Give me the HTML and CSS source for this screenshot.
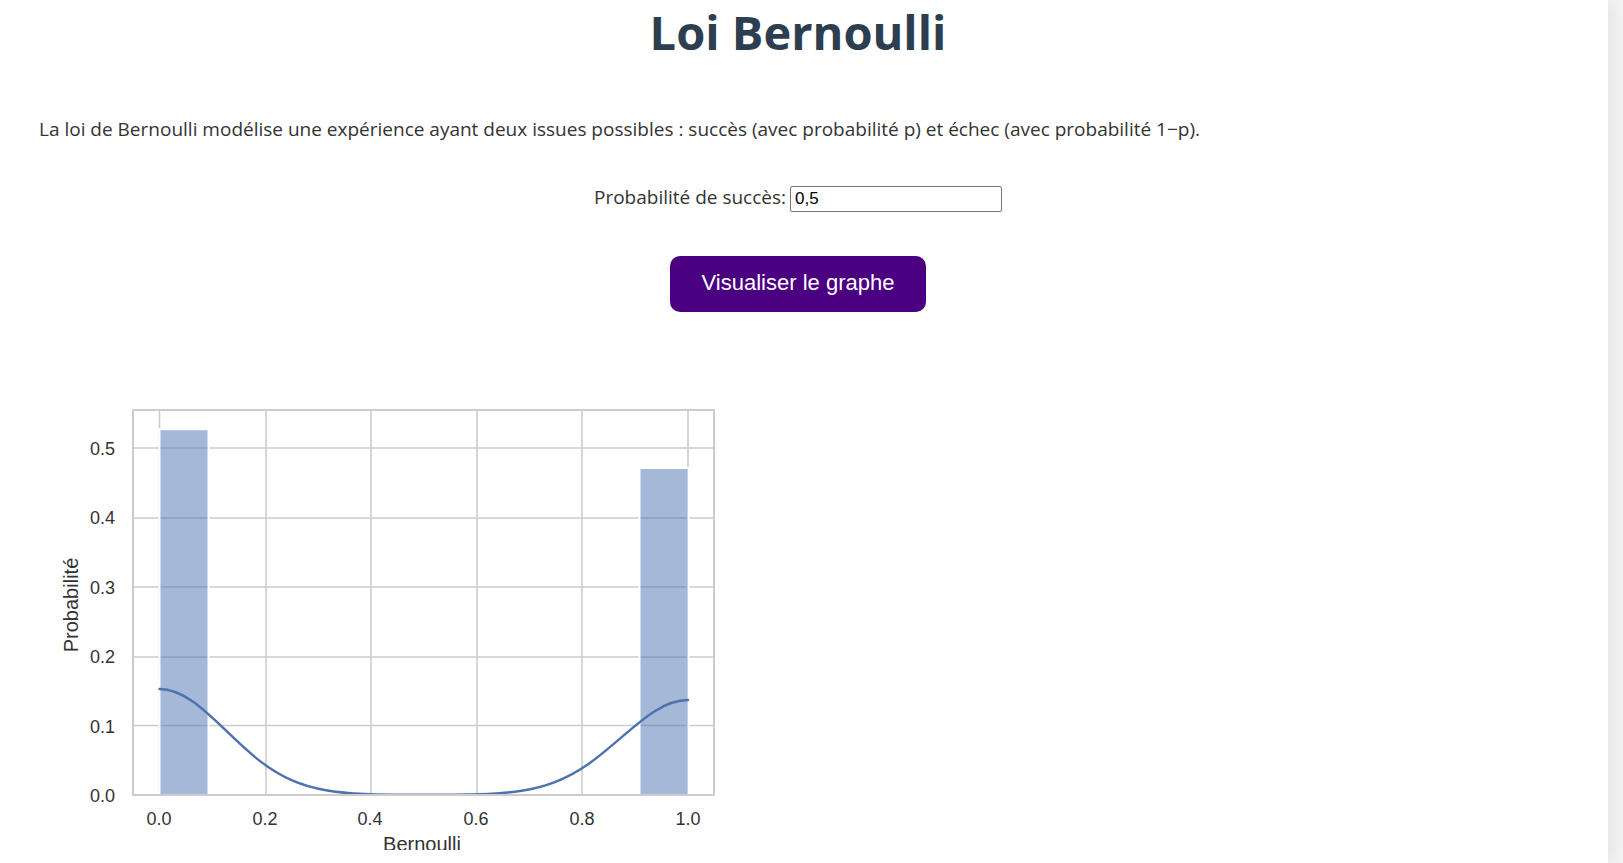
FILE: index.html
```html
<!DOCTYPE html>
<html lang="fr">
<head>
<meta charset="utf-8">
<title>Loi Bernoulli</title>
<link rel="stylesheet" href="styles.css">
</head>
<body>
<main class="panel">
  <h1 class="title">Loi Bernoulli</h1>
  <p class="intro">La loi de Bernoulli modélise une expérience ayant deux issues possibles : succès (avec probabilité p) et échec (avec probabilité 1−p).</p>
  <form class="form">
    <div class="field">
      <label for="proba">Probabilité de succès:</label>
      <input class="input" id="proba" type="text" inputmode="decimal" value="0,5">
    </div>
    <button class="submit" type="button">Visualiser le graphe</button>
  </form>
  <svg class="chart" viewBox="0 0 700 460" role="img" aria-label="Histogramme de la loi de Bernoulli">
    <path class="grid" d="M120.5 20V405M227 20V405M332 20V405M438 20V405M543 20V405M649 20V405M94 58H675M94 128H675M94 197H675M94 267H675M94 335.5H675"/>
    <rect class="bar" x="120.5" y="39.2" width="49" height="365.8"/>
    <rect class="bar" x="600.5" y="78" width="49" height="327"/>
    <path class="curve" d="M120.5 299C131.6 299 142.7 303.7 153.8 311.5S176 330 187.1 340.7S209.3 362 220.4 370.6S242.6 385.9 253.7 390.7S275.9 398.4 287 400.3S309.2 403.2 320.3 403.8S342.5 404.7 353.6 404.8M649 310C637.9 310 626.8 314.2 615.7 321.2S593.5 337.8 582.4 347.4S560.2 366.5 549.1 374.2S526.9 387.8 515.8 392.1S493.6 399.1 482.5 400.8S460.3 403.4 449.2 403.9S427 404.7 415.9 404.8L353.6 404.8"/>
    <rect class="frame" x="94" y="20" width="581" height="385"/>
    <g class="tick tick-y">
      <text x="76" y="65">0.5</text>
      <text x="76" y="134">0.4</text>
      <text x="76" y="204">0.3</text>
      <text x="76" y="273">0.2</text>
      <text x="76" y="343">0.1</text>
      <text x="76" y="412">0.0</text>
    </g>
    <g class="tick">
      <text x="120" y="435">0.0</text>
      <text x="226" y="435">0.2</text>
      <text x="331" y="435">0.4</text>
      <text x="437" y="435">0.6</text>
      <text x="543" y="435">0.8</text>
      <text x="649" y="435">1.0</text>
    </g>
    <text class="axis" x="383" y="461">Bernoulli</text>
    <text class="axis" transform="translate(39 215) rotate(-90)">Probabilité</text>
  </svg>
</main>
</body>
</html>
```

FILE: styles.css
```css
* {
  box-sizing: border-box;
}

body {
  margin: 0;
  background: #f4f4f4;
  color: #333;
  font-family: "Segoe UI", "Open Sans", sans-serif;
  font-size: 19px;
  line-height: 32px;
  overflow: hidden;
}

.panel {
  min-height: 100vh;
  margin-right: 15px;
  padding: 0 51px 13px 39px;
  background: #fff;
  box-shadow: 0 0 25px rgba(0, 0, 0, 0.1);
}

.title {
  margin: 0 0 48px;
  color: #2c3e50;
  font-size: 47px;
  line-height: 65px;
  text-align: center;
}

.intro {
  margin: 0 0 36px;
}

.form {
  display: flex;
  flex-direction: column;
  align-items: center;
  gap: 43px;
}

.field {
  display: flex;
  align-items: baseline;
  gap: 4px;
}

.input {
  width: 212px;
  height: 26px;
  padding: 1px 4px;
  border: 1px solid #767676;
  border-radius: 2px;
  background: #fff;
  color: #000;
  font-family: "Liberation Sans", Arial, sans-serif;
  font-size: 17px;
}

.submit {
  padding: 14px 32px 16px;
  border: 0;
  border-radius: 10px;
  background: #4b0082;
  color: #fff;
  font-family: "Liberation Sans", Arial, sans-serif;
  font-size: 22px;
  line-height: 26px;
}

.chart {
  display: block;
  width: 700px;
  max-width: 100%;
  margin-top: 78px;
  overflow: hidden;
  font-family: "Liberation Sans", Arial, sans-serif;
}

.grid {
  fill: none;
  stroke: #ccc;
  stroke-width: 1.6;
}

.bar {
  fill: #4c72b0;
  fill-opacity: 0.5;
  stroke: #fff;
  stroke-width: 2;
}

.curve {
  fill: none;
  stroke: #4c72b0;
  stroke-width: 2.4;
  stroke-linejoin: round;
  stroke-linecap: round;
}

.frame {
  fill: none;
  stroke: #ccc;
  stroke-width: 2;
}

.tick {
  fill: #333;
  font-size: 18px;
  text-anchor: middle;
}

.tick-y {
  text-anchor: end;
}

.axis {
  fill: #333;
  font-size: 20px;
  text-anchor: middle;
}
```
